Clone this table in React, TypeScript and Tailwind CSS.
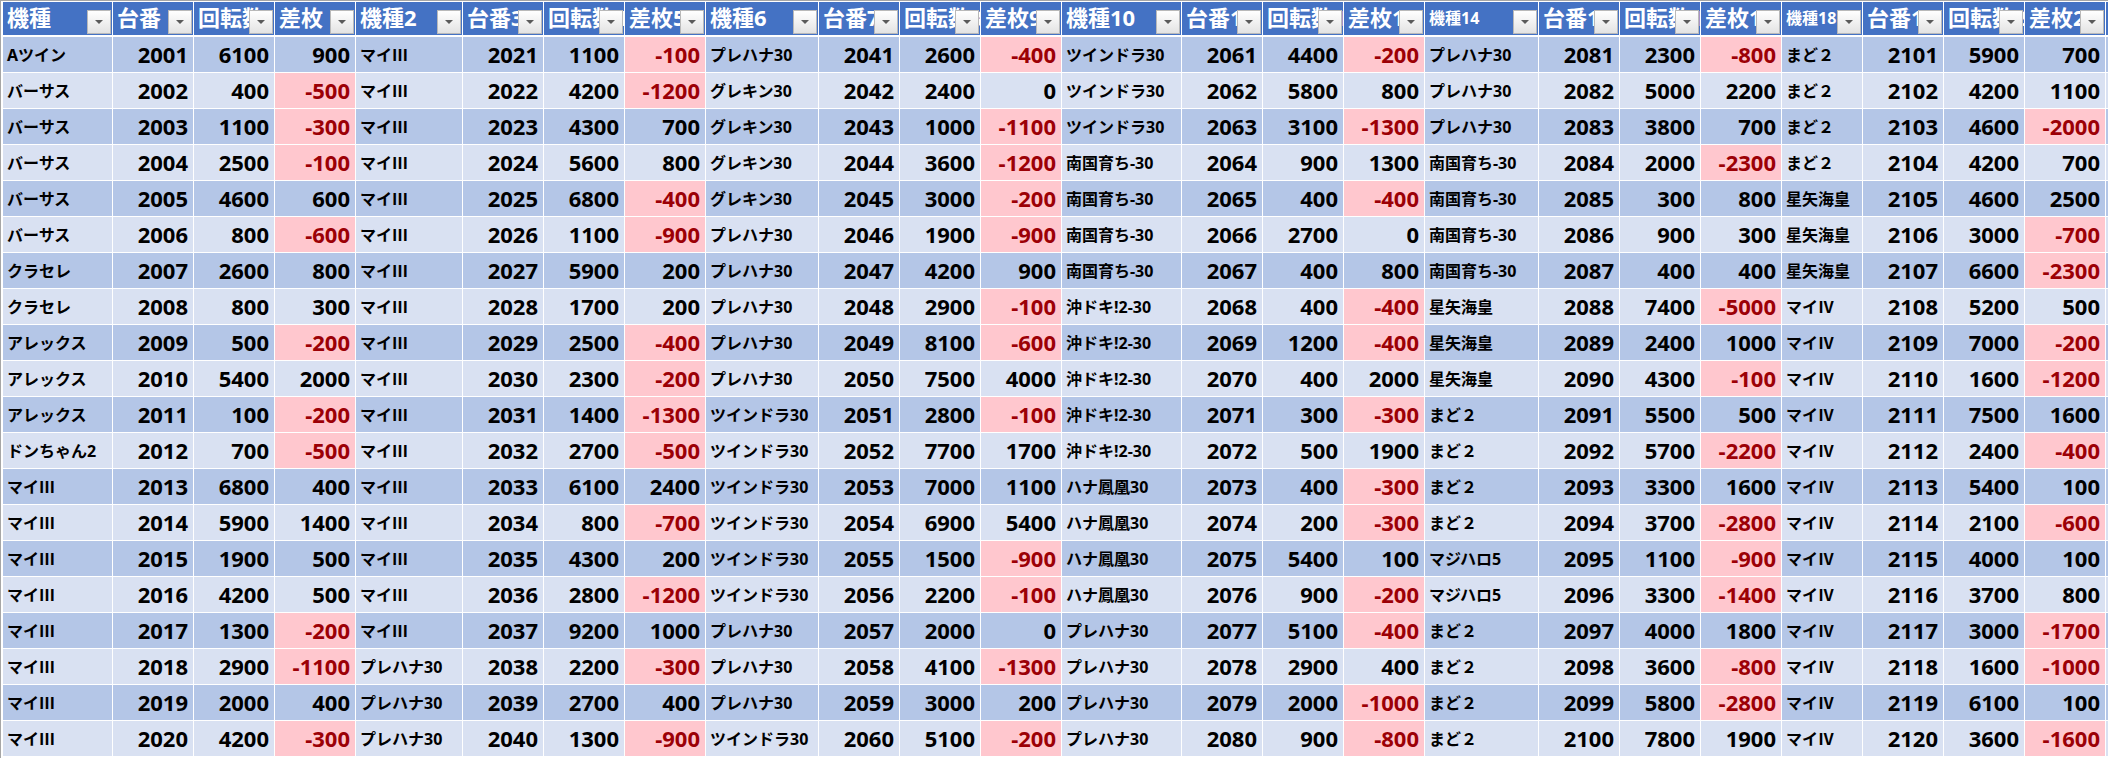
import React from "react";

const WIDTHS = [
  "w-[110px]", "w-[81px]", "w-[81px]", "w-[81px]",
  "w-[107px]", "w-[81px]", "w-[81px]", "w-[81px]",
  "w-[113px]", "w-[81px]", "w-[81px]", "w-[81px]",
  "w-[120px]", "w-[81px]", "w-[81px]", "w-[81px]",
  "w-[114px]", "w-[81px]", "w-[81px]", "w-[81px]",
  "w-[81px]", "w-[81px]", "w-[81px]", "w-[81px]",
  "w-[81px]",
];

const HEADERS = [
  "機種", "台番", "回転数", "差枚",
  "機種2", "台番3", "回転数4", "差枚5",
  "機種6", "台番7", "回転数8", "差枚9",
  "機種10", "台番11", "回転数12", "差枚13",
  "機種14", "台番15", "回転数16", "差枚17",
  "機種18", "台番19", "回転数20", "差枚21",
  "機種22",
];

function rep(name: string, n: number): string[] {
  return Array.from({ length: n }, () => name);
}

const GROUPS: { names: string[]; rot: number[]; diff: number[] }[] = [
  {
    names: [
      "Aツイン",
      ...rep("バーサス", 5),
      ...rep("クラセレ", 2),
      ...rep("アレックス", 3),
      "ドンちゃん2",
      ...rep("マイⅢ", 8),
    ],
    rot: [6100, 400, 1100, 2500, 4600, 800, 2600, 800, 500, 5400, 100, 700, 6800, 5900, 1900, 4200, 1300, 2900, 2000, 4200],
    diff: [900, -500, -300, -100, 600, -600, 800, 300, -200, 2000, -200, -500, 400, 1400, 500, 500, -200, -1100, 400, -300],
  },
  {
    names: [...rep("マイⅢ", 17), ...rep("プレハナ30", 3)],
    rot: [1100, 4200, 4300, 5600, 6800, 1100, 5900, 1700, 2500, 2300, 1400, 2700, 6100, 800, 4300, 2800, 9200, 2200, 2700, 1300],
    diff: [-100, -1200, 700, 800, -400, -900, 200, 200, -400, -200, -1300, -500, 2400, -700, 200, -1200, 1000, -300, 400, -900],
  },
  {
    names: [
      "プレハナ30",
      ...rep("グレキン30", 4),
      ...rep("プレハナ30", 5),
      ...rep("ツインドラ30", 6),
      ...rep("プレハナ30", 3),
      "ツインドラ30",
    ],
    rot: [2600, 2400, 1000, 3600, 3000, 1900, 4200, 2900, 8100, 7500, 2800, 7700, 7000, 6900, 1500, 2200, 2000, 4100, 3000, 5100],
    diff: [-400, 0, -1100, -1200, -200, -900, 900, -100, -600, 4000, -100, 1700, 1100, 5400, -900, -100, 0, -1300, 200, -200],
  },
  {
    names: [
      ...rep("ツインドラ30", 3),
      ...rep("南国育ち-30", 4),
      ...rep("沖ドキ!2-30", 5),
      ...rep("ハナ鳳凰30", 4),
      ...rep("プレハナ30", 4),
    ],
    rot: [4400, 5800, 3100, 900, 400, 2700, 400, 400, 1200, 400, 300, 500, 400, 200, 5400, 900, 5100, 2900, 2000, 900],
    diff: [-200, 800, -1300, 1300, -400, 0, 800, -400, -400, 2000, -300, 1900, -300, -300, 100, -200, -400, 400, -1000, -800],
  },
  {
    names: [
      ...rep("プレハナ30", 3),
      ...rep("南国育ち-30", 4),
      ...rep("星矢海皇", 3),
      ...rep("まど２", 4),
      ...rep("マジハロ5", 2),
      ...rep("まど２", 4),
    ],
    rot: [2300, 5000, 3800, 2000, 300, 900, 400, 7400, 2400, 4300, 5500, 5700, 3300, 3700, 1100, 3300, 4000, 3600, 5800, 7800],
    diff: [-800, 2200, 700, -2300, 800, 300, 400, -5000, 1000, -100, 500, -2200, 1600, -2800, -900, -1400, 1800, -800, -2800, 1900],
  },
  {
    names: [...rep("まど２", 4), ...rep("星矢海皇", 3), ...rep("マイⅣ", 13)],
    rot: [5900, 4200, 4600, 4200, 4600, 3000, 6600, 5200, 7000, 1600, 7500, 2400, 5400, 2100, 4000, 3700, 3000, 1600, 6100, 3600],
    diff: [700, 1100, -2000, 700, 2500, -700, -2300, 500, -200, -1200, 1600, -400, 100, -600, 100, 800, -1700, -1000, 100, -1600],
  },
];

function FilterButton() {
  return (
    <div className="absolute right-px bottom-px w-[24px] h-[24px] border border-[#b9b9b9] bg-linear-to-b from-white to-[#e3e3e3] flex items-center justify-center">
      <svg width="8" height="4" viewBox="0 0 8 4">
        <path d="M0 0H8L4 4Z" fill="#5a5a5a" />
      </svg>
    </div>
  );
}

function HeaderRow() {
  return (
    <div className="flex h-[35px] border-b-2 border-white">
      {HEADERS.map((h, i) => {
        const small = i === 16 || i === 20;
        return (
          <div
            key={i}
            className={`${WIDTHS[i]} relative shrink-0 h-full border-r border-white bg-[#4472C4] overflow-hidden`}
          >
            {small ? (
              <div className="pl-[4px] pt-[8px] whitespace-nowrap leading-none text-white font-bold text-[16px]">
                {h}
              </div>
            ) : (
              <div className="pl-[4px] pt-[4px] whitespace-nowrap leading-none text-white font-bold text-[22px]">
                {h}
              </div>
            )}
            {i < 24 && <FilterButton />}
          </div>
        );
      })}
    </div>
  );
}

function DataRow({ r }: { r: number }) {
  const odd = r % 2 === 0;
  const cells: React.ReactNode[] = [];
  GROUPS.forEach((g, gi) => {
    const base = gi * 4;
    const no = 2001 + gi * 20 + r;
    const d = g.diff[r];
    cells.push(
      <div
        key={base}
        className={`${WIDTHS[base]} shrink-0 h-full border-r border-white flex items-center pl-[4px] overflow-hidden whitespace-nowrap text-[16px] font-bold text-black`}
      >
        {g.names[r]}
      </div>
    );
    cells.push(
      <div
        key={base + 1}
        className={`${WIDTHS[base + 1]} shrink-0 h-full border-r border-white flex items-center justify-end pr-[5px] text-[22px] font-bold text-black`}
      >
        {no}
      </div>
    );
    cells.push(
      <div
        key={base + 2}
        className={`${WIDTHS[base + 2]} shrink-0 h-full border-r border-white flex items-center justify-end pr-[5px] text-[22px] font-bold text-black`}
      >
        {g.rot[r]}
      </div>
    );
    cells.push(
      <div
        key={base + 3}
        className={`${WIDTHS[base + 3]} shrink-0 h-full border-r border-white flex items-center justify-end pr-[5px] text-[22px] font-bold ${
          d < 0 ? "bg-[#FFC7CE] text-[#9C0006]" : "text-black"
        }`}
      >
        {d}
      </div>
    );
  });
  cells.push(<div key={99} className="w-[81px] shrink-0 h-full border-r border-white" />);
  return (
    <div className={`flex h-[36px] border-b border-white ${odd ? "bg-[#B4C6E7]" : "bg-[#D9E1F2]"}`}>
      {cells}
    </div>
  );
}

export default function App() {
  return (
    <div
      className="w-[2108px] h-[758px] overflow-hidden bg-white border-t border-l border-[#a6a6a6] pt-px pl-[2px]"
      style={{ fontFamily: '"Noto Sans", "Noto Sans CJK JP", sans-serif' }}
    >
      <div className="w-[2300px]">
        <HeaderRow />
        {Array.from({ length: 20 }, (_, r) => (
          <DataRow key={r} r={r} />
        ))}
      </div>
    </div>
  );
}
